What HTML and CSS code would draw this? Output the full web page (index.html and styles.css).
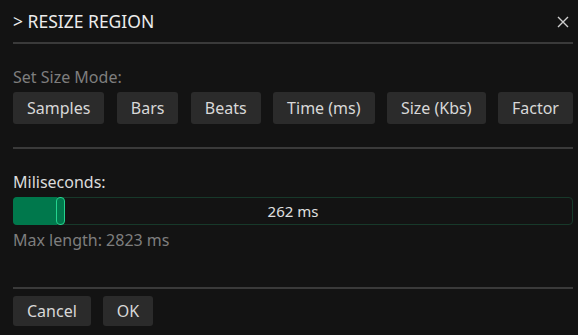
FILE: index.html
```html
<!DOCTYPE html>
<html>
<head>
<meta charset="utf-8">
<link rel="stylesheet" href="styles.css">
</head>
<body>
<div class="dialog">
  <div class="header">
    <div class="title">&gt; RESIZE REGION</div>
    <svg class="close" width="12" height="12" viewBox="0 0 12 12"><path d="M1 1 L11 11 M11 1 L1 11" stroke="#cfcfcf" stroke-width="1.4" fill="none"/></svg>
  </div>
  <div class="sep"></div>
  <div class="label muted first">Set Size Mode:</div>
  <div class="modes">
    <button class="btn">Samples</button>
    <button class="btn">Bars</button>
    <button class="btn">Beats</button>
    <button class="btn">Time (ms)</button>
    <button class="btn">Size (Kbs)</button>
    <button class="btn">Factor</button>
  </div>
  <div class="sep sep2"></div>
  <div class="label light first">Miliseconds:</div>
  <div class="slider">
    <div class="fill" style="width: 44px"></div>
    <div class="handle"></div>
    <div class="value">262 ms</div>
  </div>
  <div class="label muted max">Max length: 2823 ms</div>
  <div class="sep sep3"></div>
  <div class="actions">
    <button class="btn small">Cancel</button>
    <button class="btn small">OK</button>
  </div>
</div>
</body>
</html>
```
FILE: styles.css
```css
html, body {
  margin: 0;
  padding: 0;
  background: #131313;
}
.dialog {
  width: 578px;
  height: 335px;
  box-sizing: border-box;
  padding: 0 5px 0 13px;
  display: flex;
  flex-direction: column;
  font-family: "Noto Sans", "Open Sans", sans-serif;
  color: #dcdcdc;
}
.header {
  height: 42px;
  display: flex;
  align-items: center;
  justify-content: space-between;
}
.title {
  font-size: 17.5px;
  line-height: 19px;
  color: #ececec;
  padding-top: 1px;
}
.close {
  margin-right: 4px;
  margin-top: 1px;
}
.sep {
  height: 2px;
  background: #3a3a3a;
  flex: none;
}
.label {
  font-size: 16px;
  line-height: 20px;
}
.first {
  margin-top: 23px;
}
.muted {
  color: #7e7e7e;
}
.light {
  color: #dcdcdc;
}
.modes {
  margin-top: 5px;
  display: flex;
  justify-content: space-between;
}
.btn {
  font-family: "Noto Sans", "Open Sans", sans-serif;
  font-size: 16px;
  color: #d8d8d8;
  background: #2b2b2b;
  border: none;
  border-radius: 3px;
  height: 32px;
  padding: 0 14px;
  line-height: 32px;
}
.sep2 {
  margin-top: 23px;
}
.slider {
  margin-top: 5px;
  height: 28px;
  box-sizing: border-box;
  border: 1px solid #17392a;
  border-radius: 4px;
  position: relative;
  display: flex;
  align-items: center;
  justify-content: center;
}
.fill {
  position: absolute;
  left: -1px;
  top: -1px;
  bottom: -1px;
  background: #00784c;
  border-radius: 4px 0 0 4px;
}
.handle {
  position: absolute;
  left: 42px;
  top: -1px;
  width: 9px;
  height: 28px;
  box-sizing: border-box;
  border: 1px solid #24d38e;
  border-radius: 4px;
  background: #00784c;
}
.value {
  font-size: 15px;
  line-height: 20px;
  color: #e0e0e0;
  position: relative;
}
.max {
  margin-top: 5px;
}
.sep3 {
  margin-top: 37px;
}
.actions {
  margin-top: 7px;
  display: flex;
  gap: 12px;
}
.btn.small {
  height: 30px;
  line-height: 30px;
}
```
